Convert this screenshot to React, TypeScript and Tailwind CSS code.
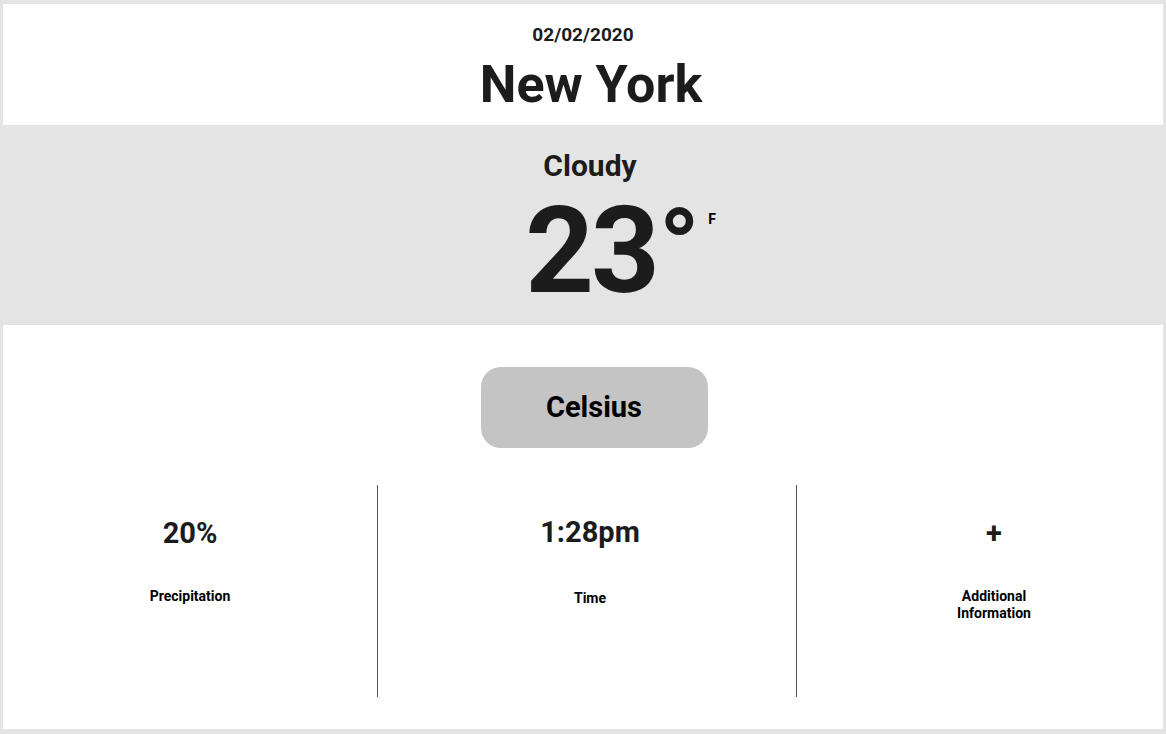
import React from "react"

const stats = [
  { value: "20%", label: "Precipitation" },
  { value: "1:28pm", label: "Time" },
  { value: "+", label: "Additional Information" },
]

const App = () => {
  return (
    <main className="w-[1166px] h-[734px] bg-[#e4e4e4] pt-[4px] px-[3px] pb-[5px] font-['Roboto',sans-serif] text-[#1c1c1c] overflow-hidden">
      <div className="w-full h-full bg-white flex flex-col">

        <header className="h-[121px] flex flex-col items-center pt-[20px]">
          <p className="text-[19px] leading-[22px] font-bold">02/02/2020</p>
          <h1 className="mt-[13px] pl-[16px] text-[52px] leading-[52px] font-bold">New York</h1>
        </header>

        <section className="-mx-[3px] h-[200px] bg-[#e4e4e4] flex flex-col items-center pt-[23px]">
          <p className="pl-[14px] text-[30px] leading-[36px] font-bold">Cloudy</p>
          <div className="mt-[7px] flex items-start pl-[75px]">
            <span className="text-[120px] leading-[120px] font-bold tracking-[-3px]">23</span>
            <span className="ml-[2px] mt-[3px] text-[106px] leading-[106px] font-bold">°</span>
            <span className="ml-[8px] mt-[21px] text-[14px] leading-[14px] font-bold text-black">F</span>
          </div>
        </section>

        <div className="flex justify-center mt-[42px] pl-[22px]">
          <button className="w-[227px] h-[81px] rounded-[20px] bg-[#c4c4c4] text-[29px] font-bold text-black">
            Celsius
          </button>
        </div>

        <div className="mt-[37px] h-[212px] grid grid-cols-[374px_1px_418px_1px_1fr]">
          <div className="flex flex-col items-center pt-[31px]">
            <span className="text-[29px] leading-[34px] font-bold">{stats[0].value}</span>
            <span className="mt-[38px] text-[14px] leading-[17px] font-bold text-black">{stats[0].label}</span>
          </div>
          <div className="bg-[#555555]" />
          <div className="flex flex-col items-center pt-[30px] pl-[6px]">
            <span className="text-[29px] leading-[34px] font-bold">{stats[1].value}</span>
            <span className="mt-[41px] text-[14px] leading-[17px] font-bold text-black">{stats[1].label}</span>
          </div>
          <div className="bg-[#555555]" />
          <div className="flex flex-col items-center pt-[31px] pl-[28px]">
            <span className="text-[29px] leading-[34px] font-bold">{stats[2].value}</span>
            <span className="mt-[38px] w-[90px] text-center text-[14px] leading-[17px] font-bold text-black">
              Additional Information
            </span>
          </div>
        </div>

      </div>
    </main>
  )
}

export default App
